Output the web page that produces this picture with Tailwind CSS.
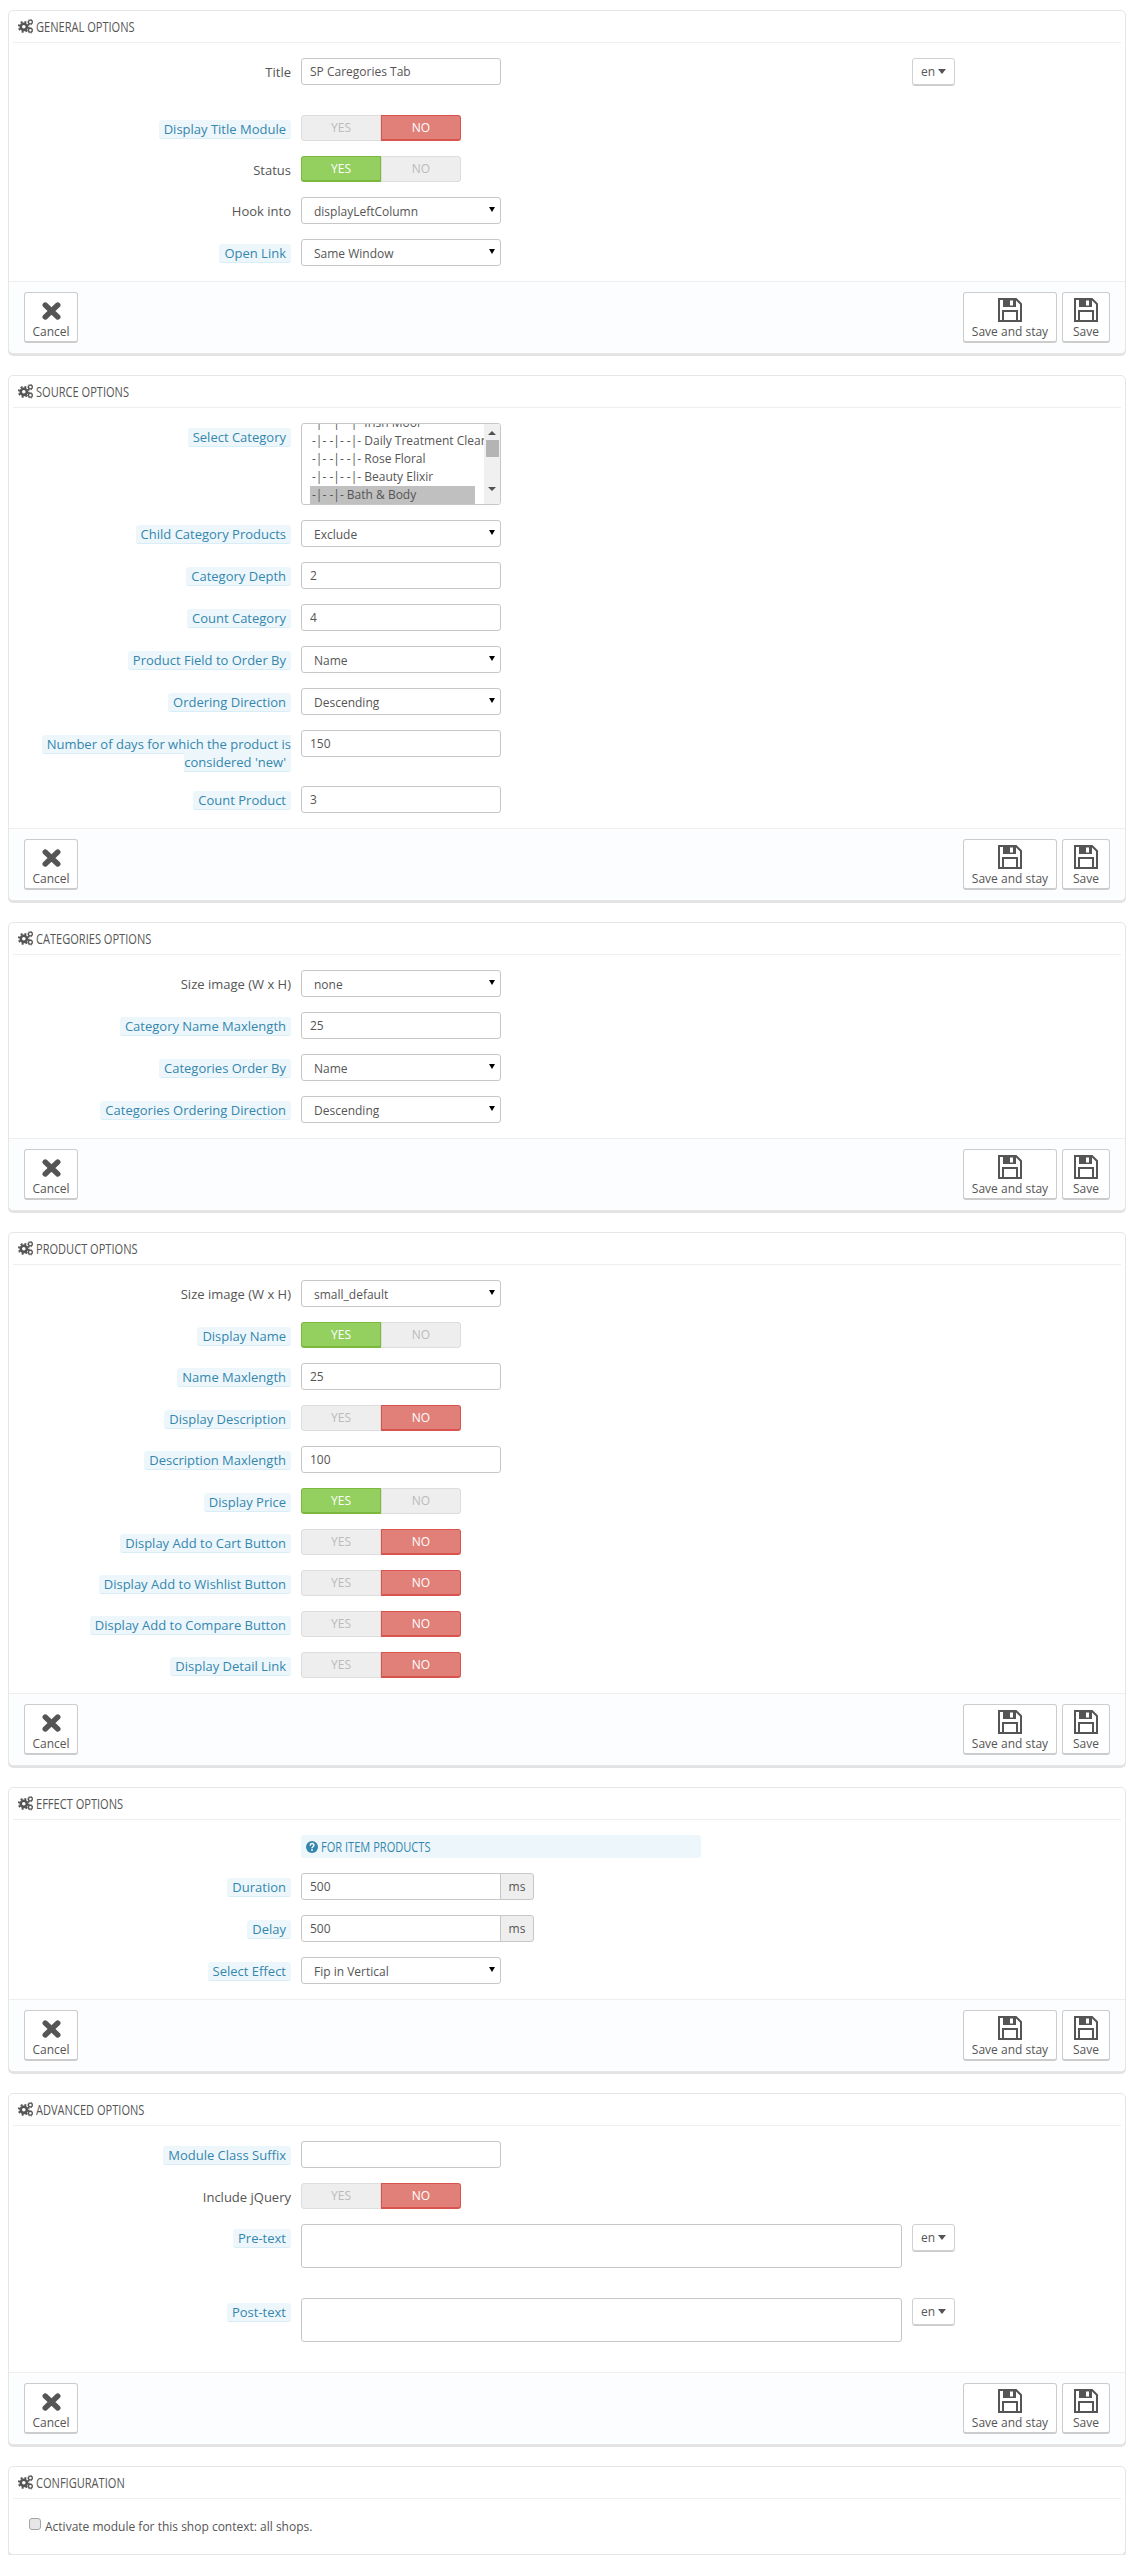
<!DOCTYPE html>
<html><head><meta charset="utf-8"><title>Module options</title><script src="https://cdn.jsdelivr.net/npm/@tailwindcss/browser@4"></script></head>
<body class="bg-white font-['Open_Sans',sans-serif] text-[12px] leading-[18px] text-[#555]">
<svg class="hidden"><defs>
<g id="cogs"><circle cx="5.8" cy="7.8" r="3.1" fill="none" stroke="#555" stroke-width="2.6"/><circle cx="5.8" cy="7.8" r="5" fill="none" stroke="#555" stroke-width="1.8" stroke-dasharray="2 1.93"/><circle cx="12.4" cy="3" r="1.9" fill="none" stroke="#555" stroke-width="1.3"/><circle cx="12.4" cy="3" r="2.8" fill="none" stroke="#555" stroke-width="0.8" stroke-dasharray="1.2 1.4"/><circle cx="12.4" cy="11.3" r="1.9" fill="none" stroke="#555" stroke-width="1.3"/><circle cx="12.4" cy="11.3" r="2.8" fill="none" stroke="#555" stroke-width="0.8" stroke-dasharray="1.2 1.4"/></g>
<g id="times"><path d="M3.2 3 L15.8 15 M15.8 3 L3.2 15" stroke="#555" stroke-width="5.4" stroke-linecap="round"/></g>
<g id="floppy"><path d="M1 1 H18 L23 6 V23 H1 Z" fill="none" stroke="#555" stroke-width="2"/><rect x="5" y="1" width="13" height="8" fill="#555"/><rect x="12" y="2.5" width="3" height="5" fill="#fff"/><rect x="5" y="13" width="14" height="10" fill="none" stroke="#555" stroke-width="2"/></g>
</defs></svg>
<main class="w-[1118px] ml-2 pt-[10px]">

<!-- GENERAL -->
<section class="mb-[21px] border border-[#e6e6e6] rounded-[5px] shadow-[0_2px_0_#e3e3e3] bg-white">
<h3 class="mx-[4px] h-[32px] border-b border-[#eeeeee] flex items-center pl-[5px] text-[14px] font-normal whitespace-nowrap"><svg class="w-[15px] h-[15px] mr-[3px]" viewBox="0 0 15 15"><use href="#cogs"/></svg><span class="inline-block origin-left scale-x-[0.79]">GENERAL OPTIONS</span></h3>
<div class="pt-[15px]">
<div class="flex mb-[30px]"><div class="w-[282px] pl-[32px] pt-[5px] text-right text-[13px]">Title</div><input value="SP Caregories Tab" class="ml-[10px] w-[200px] h-[27px] border border-[#c7c7c7] rounded-[3px] px-[8px] bg-white"><div class="ml-[411px] w-[43px] h-[27px] border border-[#d0d0d0] rounded-[3px] shadow-[0_1px_0_#ccc] flex items-center justify-center gap-[3px]">en<span class="w-0 h-0 border-x-[4px] border-x-transparent border-t-[5px] border-t-[#555]"></span></div></div>

<div class="flex mb-[15px]"><div class="w-[282px] pl-[32px] pt-[5px] text-right text-[13px]"><span class="bg-[#edf7fb] text-[#3586ae] border-b border-[#d9edf7] rounded-[3px] px-[5px]">Display Title Module</span></div><div class="ml-[10px] flex w-[160px] h-[26px] text-center leading-[24px]"><div class="w-[80px] bg-[#eeeeee] border border-[#dddddd] rounded-l-[3px] text-[#bbbbbb]">YES</div><div class="w-[80px] bg-[#e08079] border border-[#d9534f] border-b-2 rounded-r-[3px] text-white">NO</div></div></div>

<div class="flex mb-[15px]"><div class="w-[282px] pl-[32px] pt-[5px] text-right text-[13px]">Status</div><div class="ml-[10px] flex w-[160px] h-[26px] text-center leading-[24px]"><div class="w-[80px] bg-[#93d060] border border-[#7cb83e] border-b-2 rounded-l-[3px] text-white">YES</div><div class="w-[80px] bg-[#eeeeee] border border-[#dddddd] rounded-r-[3px] text-[#bbbbbb]">NO</div></div></div>

<div class="flex mb-[15px]"><div class="w-[282px] pl-[32px] pt-[5px] text-right text-[13px]">Hook into</div><div class="relative ml-[10px] w-[200px] h-[27px]"><select class="appearance-none w-full h-full border border-[#c7c7c7] rounded-[3px] pl-[12px] pt-[2px] bg-white"><option>displayLeftColumn</option></select><span class="absolute right-[6px] top-[10px] w-0 h-0 border-x-[3.5px] border-x-transparent border-t-[5px] border-t-black"></span></div></div>

<div class="flex mb-[15px]"><div class="w-[282px] pl-[32px] pt-[5px] text-right text-[13px]"><span class="bg-[#edf7fb] text-[#3586ae] border-b border-[#d9edf7] rounded-[3px] px-[5px]">Open Link</span></div><div class="relative ml-[10px] w-[200px] h-[27px]"><select class="appearance-none w-full h-full border border-[#c7c7c7] rounded-[3px] pl-[12px] pt-[2px] bg-white"><option>Same Window</option></select><span class="absolute right-[6px] top-[10px] w-0 h-0 border-x-[3.5px] border-x-transparent border-t-[5px] border-t-black"></span></div></div>
</div>
<footer class="flex border-t border-[#eeeeee] bg-[#fcfdfe] px-[15px] pt-[10px] pb-[10px] rounded-b-[5px]">
<div class="w-[54px] h-[51px] border border-[#cccccc] border-b-2 rounded-[3px] bg-white flex flex-col items-center"><svg class="w-[19px] h-[18px] mt-[9px]" viewBox="0 0 19 18"><use href="#times"/></svg><span class="mt-[3px]">Cancel</span></div>
<div class="ml-auto w-[94px] h-[51px] border border-[#cccccc] border-b-2 rounded-[3px] bg-white flex flex-col items-center"><svg class="w-[24px] h-[24px] mt-[5px]" viewBox="0 0 24 24"><use href="#floppy"/></svg><span class="mt-[1px]">Save and stay</span></div>
<div class="ml-[5px] w-[48px] h-[51px] border border-[#cccccc] border-b-2 rounded-[3px] bg-white flex flex-col items-center"><svg class="w-[24px] h-[24px] mt-[5px]" viewBox="0 0 24 24"><use href="#floppy"/></svg><span class="mt-[1px]">Save</span></div>
</footer>
</section>

<!-- SOURCE -->
<section class="mb-[21px] border border-[#e6e6e6] rounded-[5px] shadow-[0_2px_0_#e3e3e3] bg-white">
<h3 class="mx-[4px] h-[32px] border-b border-[#eeeeee] flex items-center pl-[5px] text-[14px] font-normal whitespace-nowrap"><svg class="w-[15px] h-[15px] mr-[3px]" viewBox="0 0 15 15"><use href="#cogs"/></svg><span class="inline-block origin-left scale-x-[0.79]">SOURCE OPTIONS</span></h3>
<div class="pt-[15px]">
<div class="flex mb-[15px]"><div class="w-[282px] pl-[32px] pt-[5px] text-right text-[13px]"><span class="bg-[#edf7fb] text-[#3586ae] border-b border-[#d9edf7] rounded-[3px] px-[5px]">Select Category</span></div><div class="ml-[10px] w-[200px] h-[82px] border border-[#c7c7c7] rounded-[3px] flex overflow-hidden"><div class="flex-1 overflow-hidden pl-[8px] whitespace-nowrap"><div class="mt-[-10px] w-[165px]"><div class="pl-[2px] h-[18px]">-|- -|- -|- Irish Moor</div><div class="pl-[2px] h-[18px]">-|- -|- -|- Daily Treatment Cleanser</div><div class="pl-[2px] h-[18px]">-|- -|- -|- Rose Floral</div><div class="pl-[2px] h-[18px]">-|- -|- -|- Beauty Elixir</div><div class="pl-[2px] h-[19px] bg-[#c0c0c0]">-|- -|- Bath &amp; Body</div></div></div><div class="w-[16px] bg-[#f0f0f0] flex flex-col items-center"><span class="mt-[7px] w-0 h-0 border-x-[4px] border-x-transparent border-b-[4px] border-b-[#505050]"></span><span class="mt-[5px] w-[13px] h-[17px] bg-[#b4b4b4]"></span><span class="mt-[30px] w-0 h-0 border-x-[4px] border-x-transparent border-t-[4px] border-t-[#505050]"></span></div></div></div>

<div class="flex mb-[15px]"><div class="w-[282px] pl-[32px] pt-[5px] text-right text-[13px]"><span class="bg-[#edf7fb] text-[#3586ae] border-b border-[#d9edf7] rounded-[3px] px-[5px]">Child Category Products</span></div><div class="relative ml-[10px] w-[200px] h-[27px]"><select class="appearance-none w-full h-full border border-[#c7c7c7] rounded-[3px] pl-[12px] pt-[2px] bg-white"><option>Exclude</option></select><span class="absolute right-[6px] top-[10px] w-0 h-0 border-x-[3.5px] border-x-transparent border-t-[5px] border-t-black"></span></div></div>

<div class="flex mb-[15px]"><div class="w-[282px] pl-[32px] pt-[5px] text-right text-[13px]"><span class="bg-[#edf7fb] text-[#3586ae] border-b border-[#d9edf7] rounded-[3px] px-[5px]">Category Depth</span></div><input value="2" class="ml-[10px] w-[200px] h-[27px] border border-[#c7c7c7] rounded-[3px] px-[8px] bg-white"></div>

<div class="flex mb-[15px]"><div class="w-[282px] pl-[32px] pt-[5px] text-right text-[13px]"><span class="bg-[#edf7fb] text-[#3586ae] border-b border-[#d9edf7] rounded-[3px] px-[5px]">Count Category</span></div><input value="4" class="ml-[10px] w-[200px] h-[27px] border border-[#c7c7c7] rounded-[3px] px-[8px] bg-white"></div>

<div class="flex mb-[15px]"><div class="w-[282px] pl-[32px] pt-[5px] text-right text-[13px]"><span class="bg-[#edf7fb] text-[#3586ae] border-b border-[#d9edf7] rounded-[3px] px-[5px]">Product Field to Order By</span></div><div class="relative ml-[10px] w-[200px] h-[27px]"><select class="appearance-none w-full h-full border border-[#c7c7c7] rounded-[3px] pl-[12px] pt-[2px] bg-white"><option>Name</option></select><span class="absolute right-[6px] top-[10px] w-0 h-0 border-x-[3.5px] border-x-transparent border-t-[5px] border-t-black"></span></div></div>

<div class="flex mb-[15px]"><div class="w-[282px] pl-[32px] pt-[5px] text-right text-[13px]"><span class="bg-[#edf7fb] text-[#3586ae] border-b border-[#d9edf7] rounded-[3px] px-[5px]">Ordering Direction</span></div><div class="relative ml-[10px] w-[200px] h-[27px]"><select class="appearance-none w-full h-full border border-[#c7c7c7] rounded-[3px] pl-[12px] pt-[2px] bg-white"><option>Descending</option></select><span class="absolute right-[6px] top-[10px] w-0 h-0 border-x-[3.5px] border-x-transparent border-t-[5px] border-t-black"></span></div></div>

<div class="flex mb-[15px]"><div class="w-[282px] pl-[32px] pt-[5px] text-right text-[13px]"><span class="bg-[#edf7fb] text-[#3586ae] border-b border-[#d9edf7] rounded-[3px] px-[5px]">Number of days for which the product is considered 'new'</span></div><input value="150" class="ml-[10px] w-[200px] h-[27px] border border-[#c7c7c7] rounded-[3px] px-[8px] bg-white"></div>

<div class="flex mb-[15px]"><div class="w-[282px] pl-[32px] pt-[5px] text-right text-[13px]"><span class="bg-[#edf7fb] text-[#3586ae] border-b border-[#d9edf7] rounded-[3px] px-[5px]">Count Product</span></div><input value="3" class="ml-[10px] w-[200px] h-[27px] border border-[#c7c7c7] rounded-[3px] px-[8px] bg-white"></div>
</div>
<footer class="flex border-t border-[#eeeeee] bg-[#fcfdfe] px-[15px] pt-[10px] pb-[10px] rounded-b-[5px]">
<div class="w-[54px] h-[51px] border border-[#cccccc] border-b-2 rounded-[3px] bg-white flex flex-col items-center"><svg class="w-[19px] h-[18px] mt-[9px]" viewBox="0 0 19 18"><use href="#times"/></svg><span class="mt-[3px]">Cancel</span></div>
<div class="ml-auto w-[94px] h-[51px] border border-[#cccccc] border-b-2 rounded-[3px] bg-white flex flex-col items-center"><svg class="w-[24px] h-[24px] mt-[5px]" viewBox="0 0 24 24"><use href="#floppy"/></svg><span class="mt-[1px]">Save and stay</span></div>
<div class="ml-[5px] w-[48px] h-[51px] border border-[#cccccc] border-b-2 rounded-[3px] bg-white flex flex-col items-center"><svg class="w-[24px] h-[24px] mt-[5px]" viewBox="0 0 24 24"><use href="#floppy"/></svg><span class="mt-[1px]">Save</span></div>
</footer>
</section>

<!-- CATEGORIES -->
<section class="mb-[21px] border border-[#e6e6e6] rounded-[5px] shadow-[0_2px_0_#e3e3e3] bg-white">
<h3 class="mx-[4px] h-[32px] border-b border-[#eeeeee] flex items-center pl-[5px] text-[14px] font-normal whitespace-nowrap"><svg class="w-[15px] h-[15px] mr-[3px]" viewBox="0 0 15 15"><use href="#cogs"/></svg><span class="inline-block origin-left scale-x-[0.79]">CATEGORIES OPTIONS</span></h3>
<div class="pt-[15px]">
<div class="flex mb-[15px]"><div class="w-[282px] pl-[32px] pt-[5px] text-right text-[13px]">Size image (W x H)</div><div class="relative ml-[10px] w-[200px] h-[27px]"><select class="appearance-none w-full h-full border border-[#c7c7c7] rounded-[3px] pl-[12px] pt-[2px] bg-white"><option>none</option></select><span class="absolute right-[6px] top-[10px] w-0 h-0 border-x-[3.5px] border-x-transparent border-t-[5px] border-t-black"></span></div></div>

<div class="flex mb-[15px]"><div class="w-[282px] pl-[32px] pt-[5px] text-right text-[13px]"><span class="bg-[#edf7fb] text-[#3586ae] border-b border-[#d9edf7] rounded-[3px] px-[5px]">Category Name Maxlength</span></div><input value="25" class="ml-[10px] w-[200px] h-[27px] border border-[#c7c7c7] rounded-[3px] px-[8px] bg-white"></div>

<div class="flex mb-[15px]"><div class="w-[282px] pl-[32px] pt-[5px] text-right text-[13px]"><span class="bg-[#edf7fb] text-[#3586ae] border-b border-[#d9edf7] rounded-[3px] px-[5px]">Categories Order By</span></div><div class="relative ml-[10px] w-[200px] h-[27px]"><select class="appearance-none w-full h-full border border-[#c7c7c7] rounded-[3px] pl-[12px] pt-[2px] bg-white"><option>Name</option></select><span class="absolute right-[6px] top-[10px] w-0 h-0 border-x-[3.5px] border-x-transparent border-t-[5px] border-t-black"></span></div></div>

<div class="flex mb-[15px]"><div class="w-[282px] pl-[32px] pt-[5px] text-right text-[13px]"><span class="bg-[#edf7fb] text-[#3586ae] border-b border-[#d9edf7] rounded-[3px] px-[5px]">Categories Ordering Direction</span></div><div class="relative ml-[10px] w-[200px] h-[27px]"><select class="appearance-none w-full h-full border border-[#c7c7c7] rounded-[3px] pl-[12px] pt-[2px] bg-white"><option>Descending</option></select><span class="absolute right-[6px] top-[10px] w-0 h-0 border-x-[3.5px] border-x-transparent border-t-[5px] border-t-black"></span></div></div>
</div>
<footer class="flex border-t border-[#eeeeee] bg-[#fcfdfe] px-[15px] pt-[10px] pb-[10px] rounded-b-[5px]">
<div class="w-[54px] h-[51px] border border-[#cccccc] border-b-2 rounded-[3px] bg-white flex flex-col items-center"><svg class="w-[19px] h-[18px] mt-[9px]" viewBox="0 0 19 18"><use href="#times"/></svg><span class="mt-[3px]">Cancel</span></div>
<div class="ml-auto w-[94px] h-[51px] border border-[#cccccc] border-b-2 rounded-[3px] bg-white flex flex-col items-center"><svg class="w-[24px] h-[24px] mt-[5px]" viewBox="0 0 24 24"><use href="#floppy"/></svg><span class="mt-[1px]">Save and stay</span></div>
<div class="ml-[5px] w-[48px] h-[51px] border border-[#cccccc] border-b-2 rounded-[3px] bg-white flex flex-col items-center"><svg class="w-[24px] h-[24px] mt-[5px]" viewBox="0 0 24 24"><use href="#floppy"/></svg><span class="mt-[1px]">Save</span></div>
</footer>
</section>

<!-- PRODUCT -->
<section class="mb-[21px] border border-[#e6e6e6] rounded-[5px] shadow-[0_2px_0_#e3e3e3] bg-white">
<h3 class="mx-[4px] h-[32px] border-b border-[#eeeeee] flex items-center pl-[5px] text-[14px] font-normal whitespace-nowrap"><svg class="w-[15px] h-[15px] mr-[3px]" viewBox="0 0 15 15"><use href="#cogs"/></svg><span class="inline-block origin-left scale-x-[0.79]">PRODUCT OPTIONS</span></h3>
<div class="pt-[15px]">
<div class="flex mb-[15px]"><div class="w-[282px] pl-[32px] pt-[5px] text-right text-[13px]">Size image (W x H)</div><div class="relative ml-[10px] w-[200px] h-[27px]"><select class="appearance-none w-full h-full border border-[#c7c7c7] rounded-[3px] pl-[12px] pt-[2px] bg-white"><option>small_default</option></select><span class="absolute right-[6px] top-[10px] w-0 h-0 border-x-[3.5px] border-x-transparent border-t-[5px] border-t-black"></span></div></div>

<div class="flex mb-[15px]"><div class="w-[282px] pl-[32px] pt-[5px] text-right text-[13px]"><span class="bg-[#edf7fb] text-[#3586ae] border-b border-[#d9edf7] rounded-[3px] px-[5px]">Display Name</span></div><div class="ml-[10px] flex w-[160px] h-[26px] text-center leading-[24px]"><div class="w-[80px] bg-[#93d060] border border-[#7cb83e] border-b-2 rounded-l-[3px] text-white">YES</div><div class="w-[80px] bg-[#eeeeee] border border-[#dddddd] rounded-r-[3px] text-[#bbbbbb]">NO</div></div></div>

<div class="flex mb-[15px]"><div class="w-[282px] pl-[32px] pt-[5px] text-right text-[13px]"><span class="bg-[#edf7fb] text-[#3586ae] border-b border-[#d9edf7] rounded-[3px] px-[5px]">Name Maxlength</span></div><input value="25" class="ml-[10px] w-[200px] h-[27px] border border-[#c7c7c7] rounded-[3px] px-[8px] bg-white"></div>

<div class="flex mb-[15px]"><div class="w-[282px] pl-[32px] pt-[5px] text-right text-[13px]"><span class="bg-[#edf7fb] text-[#3586ae] border-b border-[#d9edf7] rounded-[3px] px-[5px]">Display Description</span></div><div class="ml-[10px] flex w-[160px] h-[26px] text-center leading-[24px]"><div class="w-[80px] bg-[#eeeeee] border border-[#dddddd] rounded-l-[3px] text-[#bbbbbb]">YES</div><div class="w-[80px] bg-[#e08079] border border-[#d9534f] border-b-2 rounded-r-[3px] text-white">NO</div></div></div>

<div class="flex mb-[15px]"><div class="w-[282px] pl-[32px] pt-[5px] text-right text-[13px]"><span class="bg-[#edf7fb] text-[#3586ae] border-b border-[#d9edf7] rounded-[3px] px-[5px]">Description Maxlength</span></div><input value="100" class="ml-[10px] w-[200px] h-[27px] border border-[#c7c7c7] rounded-[3px] px-[8px] bg-white"></div>

<div class="flex mb-[15px]"><div class="w-[282px] pl-[32px] pt-[5px] text-right text-[13px]"><span class="bg-[#edf7fb] text-[#3586ae] border-b border-[#d9edf7] rounded-[3px] px-[5px]">Display Price</span></div><div class="ml-[10px] flex w-[160px] h-[26px] text-center leading-[24px]"><div class="w-[80px] bg-[#93d060] border border-[#7cb83e] border-b-2 rounded-l-[3px] text-white">YES</div><div class="w-[80px] bg-[#eeeeee] border border-[#dddddd] rounded-r-[3px] text-[#bbbbbb]">NO</div></div></div>

<div class="flex mb-[15px]"><div class="w-[282px] pl-[32px] pt-[5px] text-right text-[13px]"><span class="bg-[#edf7fb] text-[#3586ae] border-b border-[#d9edf7] rounded-[3px] px-[5px]">Display Add to Cart Button</span></div><div class="ml-[10px] flex w-[160px] h-[26px] text-center leading-[24px]"><div class="w-[80px] bg-[#eeeeee] border border-[#dddddd] rounded-l-[3px] text-[#bbbbbb]">YES</div><div class="w-[80px] bg-[#e08079] border border-[#d9534f] border-b-2 rounded-r-[3px] text-white">NO</div></div></div>

<div class="flex mb-[15px]"><div class="w-[282px] pl-[32px] pt-[5px] text-right text-[13px]"><span class="bg-[#edf7fb] text-[#3586ae] border-b border-[#d9edf7] rounded-[3px] px-[5px]">Display Add to Wishlist Button</span></div><div class="ml-[10px] flex w-[160px] h-[26px] text-center leading-[24px]"><div class="w-[80px] bg-[#eeeeee] border border-[#dddddd] rounded-l-[3px] text-[#bbbbbb]">YES</div><div class="w-[80px] bg-[#e08079] border border-[#d9534f] border-b-2 rounded-r-[3px] text-white">NO</div></div></div>

<div class="flex mb-[15px]"><div class="w-[282px] pl-[32px] pt-[5px] text-right text-[13px]"><span class="bg-[#edf7fb] text-[#3586ae] border-b border-[#d9edf7] rounded-[3px] px-[5px]">Display Add to Compare Button</span></div><div class="ml-[10px] flex w-[160px] h-[26px] text-center leading-[24px]"><div class="w-[80px] bg-[#eeeeee] border border-[#dddddd] rounded-l-[3px] text-[#bbbbbb]">YES</div><div class="w-[80px] bg-[#e08079] border border-[#d9534f] border-b-2 rounded-r-[3px] text-white">NO</div></div></div>

<div class="flex mb-[15px]"><div class="w-[282px] pl-[32px] pt-[5px] text-right text-[13px]"><span class="bg-[#edf7fb] text-[#3586ae] border-b border-[#d9edf7] rounded-[3px] px-[5px]">Display Detail Link</span></div><div class="ml-[10px] flex w-[160px] h-[26px] text-center leading-[24px]"><div class="w-[80px] bg-[#eeeeee] border border-[#dddddd] rounded-l-[3px] text-[#bbbbbb]">YES</div><div class="w-[80px] bg-[#e08079] border border-[#d9534f] border-b-2 rounded-r-[3px] text-white">NO</div></div></div>
</div>
<footer class="flex border-t border-[#eeeeee] bg-[#fcfdfe] px-[15px] pt-[10px] pb-[10px] rounded-b-[5px]">
<div class="w-[54px] h-[51px] border border-[#cccccc] border-b-2 rounded-[3px] bg-white flex flex-col items-center"><svg class="w-[19px] h-[18px] mt-[9px]" viewBox="0 0 19 18"><use href="#times"/></svg><span class="mt-[3px]">Cancel</span></div>
<div class="ml-auto w-[94px] h-[51px] border border-[#cccccc] border-b-2 rounded-[3px] bg-white flex flex-col items-center"><svg class="w-[24px] h-[24px] mt-[5px]" viewBox="0 0 24 24"><use href="#floppy"/></svg><span class="mt-[1px]">Save and stay</span></div>
<div class="ml-[5px] w-[48px] h-[51px] border border-[#cccccc] border-b-2 rounded-[3px] bg-white flex flex-col items-center"><svg class="w-[24px] h-[24px] mt-[5px]" viewBox="0 0 24 24"><use href="#floppy"/></svg><span class="mt-[1px]">Save</span></div>
</footer>
</section>

<!-- EFFECT -->
<section class="mb-[21px] border border-[#e6e6e6] rounded-[5px] shadow-[0_2px_0_#e3e3e3] bg-white">
<h3 class="mx-[4px] h-[32px] border-b border-[#eeeeee] flex items-center pl-[5px] text-[14px] font-normal whitespace-nowrap"><svg class="w-[15px] h-[15px] mr-[3px]" viewBox="0 0 15 15"><use href="#cogs"/></svg><span class="inline-block origin-left scale-x-[0.79]">EFFECT OPTIONS</span></h3>
<div class="pt-[15px]">
<div class="ml-[292px] mb-[15px] w-[400px] h-[23px] bg-[#edf7fb] rounded-[3px] flex items-center pl-[5px] text-[#3586ae] text-[14px] whitespace-nowrap"><svg class="w-[12px] h-[12px] mr-[3px]" viewBox="0 0 12 12"><circle cx="6" cy="6" r="6" fill="#3586ae"/><path d="M4.2 4.6 C4.3 2 7.9 2 7.9 4.3 C7.9 5.8 6 5.7 6 7.2" fill="none" stroke="#fff" stroke-width="1.5"/><rect x="5.2" y="8.2" width="1.6" height="1.6" fill="#fff"/></svg><span class="inline-block origin-left scale-x-[0.79]">FOR ITEM PRODUCTS</span></div>

<div class="flex mb-[15px]"><div class="w-[282px] pl-[32px] pt-[5px] text-right text-[13px]"><span class="bg-[#edf7fb] text-[#3586ae] border-b border-[#d9edf7] rounded-[3px] px-[5px]">Duration</span></div><div class="ml-[10px] flex w-[234px] h-[27px]"><input value="500" class="w-[200px] h-[27px] border border-[#c7c7c7] rounded-l-[3px] px-[8px] bg-white"><div class="w-[34px] ml-[-1px] border border-[#c7c7c7] rounded-r-[3px] bg-[#eeeeee] text-center leading-[25px] flex-none">ms</div></div></div>

<div class="flex mb-[15px]"><div class="w-[282px] pl-[32px] pt-[5px] text-right text-[13px]"><span class="bg-[#edf7fb] text-[#3586ae] border-b border-[#d9edf7] rounded-[3px] px-[5px]">Delay</span></div><div class="ml-[10px] flex w-[234px] h-[27px]"><input value="500" class="w-[200px] h-[27px] border border-[#c7c7c7] rounded-l-[3px] px-[8px] bg-white"><div class="w-[34px] ml-[-1px] border border-[#c7c7c7] rounded-r-[3px] bg-[#eeeeee] text-center leading-[25px] flex-none">ms</div></div></div>

<div class="flex mb-[15px]"><div class="w-[282px] pl-[32px] pt-[5px] text-right text-[13px]"><span class="bg-[#edf7fb] text-[#3586ae] border-b border-[#d9edf7] rounded-[3px] px-[5px]">Select Effect</span></div><div class="relative ml-[10px] w-[200px] h-[27px]"><select class="appearance-none w-full h-full border border-[#c7c7c7] rounded-[3px] pl-[12px] pt-[2px] bg-white"><option>Fip in Vertical</option></select><span class="absolute right-[6px] top-[10px] w-0 h-0 border-x-[3.5px] border-x-transparent border-t-[5px] border-t-black"></span></div></div>
</div>
<footer class="flex border-t border-[#eeeeee] bg-[#fcfdfe] px-[15px] pt-[10px] pb-[10px] rounded-b-[5px]">
<div class="w-[54px] h-[51px] border border-[#cccccc] border-b-2 rounded-[3px] bg-white flex flex-col items-center"><svg class="w-[19px] h-[18px] mt-[9px]" viewBox="0 0 19 18"><use href="#times"/></svg><span class="mt-[3px]">Cancel</span></div>
<div class="ml-auto w-[94px] h-[51px] border border-[#cccccc] border-b-2 rounded-[3px] bg-white flex flex-col items-center"><svg class="w-[24px] h-[24px] mt-[5px]" viewBox="0 0 24 24"><use href="#floppy"/></svg><span class="mt-[1px]">Save and stay</span></div>
<div class="ml-[5px] w-[48px] h-[51px] border border-[#cccccc] border-b-2 rounded-[3px] bg-white flex flex-col items-center"><svg class="w-[24px] h-[24px] mt-[5px]" viewBox="0 0 24 24"><use href="#floppy"/></svg><span class="mt-[1px]">Save</span></div>
</footer>
</section>

<!-- ADVANCED -->
<section class="mb-[21px] border border-[#e6e6e6] rounded-[5px] shadow-[0_2px_0_#e3e3e3] bg-white">
<h3 class="mx-[4px] h-[32px] border-b border-[#eeeeee] flex items-center pl-[5px] text-[14px] font-normal whitespace-nowrap"><svg class="w-[15px] h-[15px] mr-[3px]" viewBox="0 0 15 15"><use href="#cogs"/></svg><span class="inline-block origin-left scale-x-[0.79]">ADVANCED OPTIONS</span></h3>
<div class="pt-[15px]">
<div class="flex mb-[15px]"><div class="w-[282px] pl-[32px] pt-[5px] text-right text-[13px]"><span class="bg-[#edf7fb] text-[#3586ae] border-b border-[#d9edf7] rounded-[3px] px-[5px]">Module Class Suffix</span></div><input value="" class="ml-[10px] w-[200px] h-[27px] border border-[#c7c7c7] rounded-[3px] px-[8px] bg-white"></div>

<div class="flex mb-[15px]"><div class="w-[282px] pl-[32px] pt-[5px] text-right text-[13px]">Include jQuery</div><div class="ml-[10px] flex w-[160px] h-[26px] text-center leading-[24px]"><div class="w-[80px] bg-[#eeeeee] border border-[#dddddd] rounded-l-[3px] text-[#bbbbbb]">YES</div><div class="w-[80px] bg-[#e08079] border border-[#d9534f] border-b-2 rounded-r-[3px] text-white">NO</div></div></div>

<div class="flex mb-[30px]"><div class="w-[282px] pl-[32px] pt-[5px] text-right text-[13px]"><span class="bg-[#edf7fb] text-[#3586ae] border-b border-[#d9edf7] rounded-[3px] px-[5px]">Pre-text</span></div><textarea class="ml-[10px] w-[601px] h-[44px] border border-[#c7c7c7] rounded-[3px] bg-white resize-none"></textarea><div class="ml-[10px] w-[43px] h-[27px] border border-[#d0d0d0] rounded-[3px] shadow-[0_1px_0_#ccc] flex items-center justify-center gap-[3px]">en<span class="w-0 h-0 border-x-[4px] border-x-transparent border-t-[5px] border-t-[#555]"></span></div></div>

<div class="flex mb-[30px]"><div class="w-[282px] pl-[32px] pt-[5px] text-right text-[13px]"><span class="bg-[#edf7fb] text-[#3586ae] border-b border-[#d9edf7] rounded-[3px] px-[5px]">Post-text</span></div><textarea class="ml-[10px] w-[601px] h-[44px] border border-[#c7c7c7] rounded-[3px] bg-white resize-none"></textarea><div class="ml-[10px] w-[43px] h-[27px] border border-[#d0d0d0] rounded-[3px] shadow-[0_1px_0_#ccc] flex items-center justify-center gap-[3px]">en<span class="w-0 h-0 border-x-[4px] border-x-transparent border-t-[5px] border-t-[#555]"></span></div></div>
</div>
<footer class="flex border-t border-[#eeeeee] bg-[#fcfdfe] px-[15px] pt-[10px] pb-[10px] rounded-b-[5px]">
<div class="w-[54px] h-[51px] border border-[#cccccc] border-b-2 rounded-[3px] bg-white flex flex-col items-center"><svg class="w-[19px] h-[18px] mt-[9px]" viewBox="0 0 19 18"><use href="#times"/></svg><span class="mt-[3px]">Cancel</span></div>
<div class="ml-auto w-[94px] h-[51px] border border-[#cccccc] border-b-2 rounded-[3px] bg-white flex flex-col items-center"><svg class="w-[24px] h-[24px] mt-[5px]" viewBox="0 0 24 24"><use href="#floppy"/></svg><span class="mt-[1px]">Save and stay</span></div>
<div class="ml-[5px] w-[48px] h-[51px] border border-[#cccccc] border-b-2 rounded-[3px] bg-white flex flex-col items-center"><svg class="w-[24px] h-[24px] mt-[5px]" viewBox="0 0 24 24"><use href="#floppy"/></svg><span class="mt-[1px]">Save</span></div>
</footer>
</section>

<!-- CONFIGURATION -->
<section class="border border-[#e6e6e6] rounded-[5px] shadow-[0_2px_0_#e3e3e3] bg-white">
<h3 class="mx-[4px] h-[32px] border-b border-[#eeeeee] flex items-center pl-[5px] text-[14px] font-normal whitespace-nowrap"><svg class="w-[15px] h-[15px] mr-[3px]" viewBox="0 0 15 15"><use href="#cogs"/></svg><span class="inline-block origin-left scale-x-[0.79]">CONFIGURATION</span></h3>
<div class="h-[55px] pt-[19px] pl-[20px] flex items-start"><input type="checkbox" class="appearance-none w-[12px] h-[12px] border border-[#a5a5a5] rounded-[3px] bg-[#e6e6e6]"><span class="ml-[4px]">Activate module for this shop context: all shops.</span></div>
</section>

</main>
</body></html>
